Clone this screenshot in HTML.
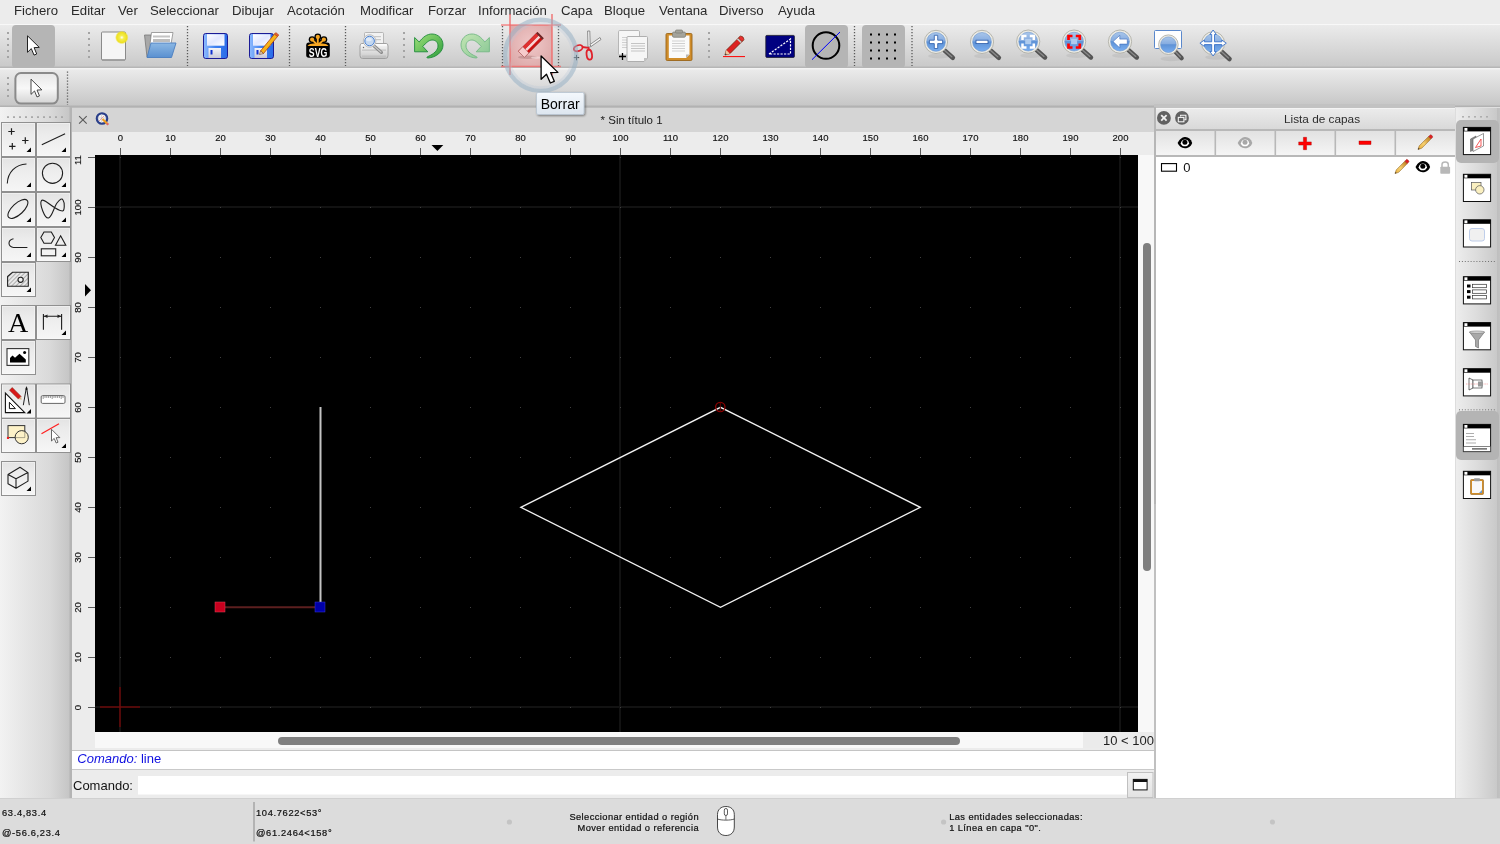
<!DOCTYPE html>
<html><head><meta charset="utf-8">
<style>
*{box-sizing:border-box}
html,body{margin:0;padding:0}
body{width:1500px;height:844px;overflow:hidden;position:relative;will-change:transform;background:#ececec;font-family:"Liberation Sans",sans-serif;color:#262626}
.a{position:absolute}
#menubar{left:0;top:0;width:1500px;height:24px;background:#ececec}
#menubar span{position:absolute;top:3px;font-size:13.2px;color:#2a2a2a;line-height:15px}
#tb1{left:0;top:24px;width:1500px;height:45px;background:linear-gradient(#f8f8f8 0px,#f8f8f8 1px,#ebebeb 1px,#cacaca 42px,#b6b6b6 43px,#b6b6b6 44px,#f4f4f4 44px)}
#tb2{left:0;top:69px;width:1500px;height:38px;background:linear-gradient(#f4f4f4 0px,#eaeaea 1px,#c7c7c7 36px,#b2b2b2 37px)}
#palette{left:0;top:107px;width:72px;height:691px;background:linear-gradient(90deg,#f2f2f2 0px,#d9d9d9 50px,#c6c6c6 69px,#b4b4b4 70px,#b4b4b4 72px)}
#doc{left:72px;top:107px;width:1084px;height:691px;background:linear-gradient(#bcbcbc 0px,#bcbcbc 1px,#ececec 1px)}
#tabbar{left:0;top:1px;width:1082px;height:24px;background:#d5d5d5}
#rulerTop{left:0;top:25px;width:1082px;height:23px;background:#ececec}
#rulerLeft{left:0;top:48px;width:23px;height:593px;background:#ececec}
#canvas{left:23px;top:48px;width:1043px;height:577px;background:#000;overflow:hidden}
#vscroll{left:1066px;top:48px;width:16px;height:577px;background:#f8f8f8}
#hscroll{left:23px;top:625px;width:988px;height:16px;background:#f8f8f8}
#zoomlbl{left:1011px;top:625px;width:71px;height:16px;background:#ebebeb;font-size:13px;text-align:right;line-height:18px;color:#1e1e1e}
#cmdhist{left:0;top:643px;width:1082px;height:20px;background:#fff;border-top:1px solid #c4c4c4;border-bottom:1px solid #c9c9c9}
#cmdrow{left:0;top:663px;width:1082px;height:28px;background:#ececec}
#docborder{left:1082px;top:0;width:2px;height:691px;background:#c0c0c0}
#ldock{left:1156px;top:107px;width:299px;height:691px;background:#fff}
#rdock{left:1455px;top:107px;width:45px;height:691px;background:linear-gradient(90deg,#cdcdcd 0px,#ededed 1px,#dcdcdc 22px,#c9c9c9 42px,#bfbfbf 42.5px,#c2c2c2 45px)}
#status{left:0;top:798px;width:1500px;height:46px;background:#dcdcdc;border-top:1px solid #d0d0d0}
.st{position:absolute;font-size:10px;color:#262626;letter-spacing:0.3px;line-height:12px;white-space:nowrap}
</style></head>
<body>
<div id="menubar" class="a">
<span style="left:14px">Fichero</span>
<span style="left:71px">Editar</span>
<span style="left:118px">Ver</span>
<span style="left:150px">Seleccionar</span>
<span style="left:232px">Dibujar</span>
<span style="left:287px">Acotación</span>
<span style="left:360px">Modificar</span>
<span style="left:428px">Forzar</span>
<span style="left:478px">Información</span>
<span style="left:561px">Capa</span>
<span style="left:604px">Bloque</span>
<span style="left:659px">Ventana</span>
<span style="left:719px">Diverso</span>
<span style="left:778px">Ayuda</span>
</div>
<div id="tb1" class="a"></div>
<div id="tb2" class="a"></div>
<svg class="a" style="left:0;top:0" width="1500" height="110" viewBox="0 0 1500 110">
<defs>
<linearGradient id="lensG" x1="0" y1="0" x2="0" y2="1"><stop offset="0" stop-color="#a9c6ea"/><stop offset="0.45" stop-color="#86ace0"/><stop offset="0.5" stop-color="#5e92d6"/><stop offset="1" stop-color="#79aef0"/></linearGradient>
<linearGradient id="floppyG" x1="0" y1="0" x2="1" y2="0"><stop offset="0" stop-color="#8fbcff"/><stop offset="0.5" stop-color="#3d7ff0"/><stop offset="1" stop-color="#2a6ce8"/></linearGradient>
<linearGradient id="labelG" x1="0" y1="0" x2="1" y2="1"><stop offset="0" stop-color="#ffffff"/><stop offset="0.5" stop-color="#e2e8ff"/><stop offset="1" stop-color="#ffffff"/></linearGradient>
<linearGradient id="shutG" x1="0" y1="0" x2="0" y2="1"><stop offset="0" stop-color="#f4f4f8"/><stop offset="1" stop-color="#c8c8d8"/></linearGradient>
<linearGradient id="undoG" x1="0" y1="0" x2="1" y2="1"><stop offset="0" stop-color="#9fe07a"/><stop offset="1" stop-color="#2f9e3c"/></linearGradient>
<linearGradient id="redoG" x1="1" y1="0" x2="0" y2="1"><stop offset="0" stop-color="#c4e6b4"/><stop offset="1" stop-color="#86c694"/></linearGradient>
<linearGradient id="printG" x1="0" y1="0" x2="0" y2="1"><stop offset="0" stop-color="#f8f8f8"/><stop offset="1" stop-color="#c8c8c8"/></linearGradient>
<linearGradient id="folderG" x1="0" y1="0" x2="0" y2="1"><stop offset="0" stop-color="#8cb8e4"/><stop offset="1" stop-color="#5a90d0"/></linearGradient>
<radialGradient id="glowG"><stop offset="0" stop-color="#ffffff"/><stop offset="0.3" stop-color="#f4ee50"/><stop offset="0.75" stop-color="#eee020"/><stop offset="1" stop-color="#eee020" stop-opacity="0"/></radialGradient>
<radialGradient id="pinkG" cx="0.5" cy="0.45" r="0.65"><stop offset="0" stop-color="#f0c8c8"/><stop offset="1" stop-color="#dca8a8"/></radialGradient>
<linearGradient id="btn2G" x1="0" y1="0" x2="0" y2="1"><stop offset="0" stop-color="#e6e6e6"/><stop offset="0.5" stop-color="#f8f8f8"/><stop offset="1" stop-color="#d4d4d4"/></linearGradient>
</defs>
<rect x="7" y="32" width="2" height="2" fill="#a4a4a4"/>
<rect x="7" y="38" width="2" height="2" fill="#a4a4a4"/>
<rect x="7" y="44" width="2" height="2" fill="#a4a4a4"/>
<rect x="7" y="50" width="2" height="2" fill="#a4a4a4"/>
<rect x="7" y="56" width="2" height="2" fill="#a4a4a4"/>
<rect x="88" y="32" width="2" height="2" fill="#a4a4a4"/>
<rect x="88" y="38" width="2" height="2" fill="#a4a4a4"/>
<rect x="88" y="44" width="2" height="2" fill="#a4a4a4"/>
<rect x="88" y="50" width="2" height="2" fill="#a4a4a4"/>
<rect x="88" y="56" width="2" height="2" fill="#a4a4a4"/>
<rect x="403" y="32" width="2" height="2" fill="#a4a4a4"/>
<rect x="403" y="38" width="2" height="2" fill="#a4a4a4"/>
<rect x="403" y="44" width="2" height="2" fill="#a4a4a4"/>
<rect x="403" y="50" width="2" height="2" fill="#a4a4a4"/>
<rect x="403" y="56" width="2" height="2" fill="#a4a4a4"/>
<rect x="708" y="32" width="2" height="2" fill="#a4a4a4"/>
<rect x="708" y="38" width="2" height="2" fill="#a4a4a4"/>
<rect x="708" y="44" width="2" height="2" fill="#a4a4a4"/>
<rect x="708" y="50" width="2" height="2" fill="#a4a4a4"/>
<rect x="708" y="56" width="2" height="2" fill="#a4a4a4"/>
<line x1="187.5" y1="26" x2="187.5" y2="66" stroke="#5a5a5a" stroke-width="1.3" stroke-dasharray="1.3 1.7"/>
<line x1="289.5" y1="26" x2="289.5" y2="66" stroke="#5a5a5a" stroke-width="1.3" stroke-dasharray="1.3 1.7"/>
<line x1="345.5" y1="26" x2="345.5" y2="66" stroke="#5a5a5a" stroke-width="1.3" stroke-dasharray="1.3 1.7"/>
<line x1="502.5" y1="26" x2="502.5" y2="66" stroke="#5a5a5a" stroke-width="1.3" stroke-dasharray="1.3 1.7"/>
<line x1="558.5" y1="26" x2="558.5" y2="66" stroke="#5a5a5a" stroke-width="1.3" stroke-dasharray="1.3 1.7"/>
<line x1="854.5" y1="26" x2="854.5" y2="66" stroke="#5a5a5a" stroke-width="1.3" stroke-dasharray="1.3 1.7"/>
<line x1="912" y1="26" x2="912" y2="66" stroke="#5a5a5a" stroke-width="1.3" stroke-dasharray="1.3 1.7"/>
<rect x="12" y="25" width="43" height="43" rx="4" fill="#b5b5b5"/>
<rect x="805" y="25" width="43" height="43" rx="4" fill="#b5b5b5"/>
<rect x="862" y="25" width="43" height="43" rx="4" fill="#b5b5b5"/>
<path d="M27.50 35.80 L27.50 52.30 L31.30 48.60 L34.00 55.10 L36.70 54.00 L34.10 47.60 L39.30 47.40 Z" fill="#fff" stroke="#222" stroke-width="1" stroke-linejoin="round"/>
<rect x="101.5" y="32" width="24" height="28" rx="1" fill="#f5f5f5" stroke="#8a8a8a" stroke-width="1"/>
<line x1="102" y1="60" x2="125" y2="60" stroke="#9a9a9a" stroke-width="1.5"/>
<circle cx="121.8" cy="37.5" r="6.8" fill="url(#glowG)"/>
<path d="M144.5 35 L151 35 L150 57 L147 57 Z" fill="#a8a8a8" stroke="#777" stroke-width="0.8"/>
<path d="M151.5 32.5 L173 32.5 L171 44 L149 52 Z" fill="#fff" stroke="#8a8a8a" stroke-width="0.8"/>
<rect x="153" y="35.5" width="17" height="2" fill="#c4c4c4"/><rect x="153" y="39" width="17" height="3" fill="#bdbdbd"/>
<path d="M151 43 L176 43 L171.5 57.5 L147 57.5 Z" fill="url(#folderG)" stroke="#4a7ec0" stroke-width="0.9" stroke-linejoin="round"/>
<rect x="203.5" y="33.5" width="24" height="25" rx="2.2" fill="url(#floppyG)" stroke="#1b1b96" stroke-width="1"/>
<rect x="207" y="34.2" width="17.5" height="11.5" fill="url(#labelG)"/>
<rect x="208.5" y="48" width="12.5" height="10" fill="url(#shutG)"/>
<rect x="210.5" y="50" width="2" height="4.5" fill="#1030d0"/>
<rect x="249.5" y="33.5" width="24" height="25" rx="2.2" fill="url(#floppyG)" stroke="#1b1b96" stroke-width="1"/>
<rect x="253" y="34.2" width="17.5" height="11.5" fill="url(#labelG)"/>
<rect x="254.5" y="48" width="12.5" height="10" fill="url(#shutG)"/>
<rect x="256.5" y="50" width="2" height="4.5" fill="#1030d0"/>
<path d="M260.5 51 L274.5 34 L277.5 36.5 L263.5 53.5 Z" fill="#f6b418" stroke="#b04010" stroke-width="0.8"/>
<path d="M260.5 51 L263.5 53.5 L259.5 54.5 Z" fill="#f0e0c0" stroke="#704020" stroke-width="0.6"/>
<path d="M274.5 34 L275.8 32.6 L278.8 35 L277.5 36.5 Z" fill="#e86030" stroke="#b04010" stroke-width="0.6"/>
<g stroke="#000" stroke-width="4.4" stroke-linecap="round"><line x1="317.8" y1="37" x2="317.8" y2="44.5"/><line x1="312.1" y1="39.6" x2="317" y2="44.5"/><line x1="323.9" y1="39.6" x2="318.6" y2="44.5"/></g>
<g fill="#000"><circle cx="317.8" cy="36.9" r="3.4"/><circle cx="312.1" cy="39.6" r="3.4"/><circle cx="323.9" cy="39.6" r="3.4"/></g>
<rect x="306.2" y="42.6" width="23.6" height="15.1" rx="2.6" fill="#000"/>
<g stroke="#f5a623" stroke-width="1.9" stroke-linecap="round"><line x1="317.8" y1="37" x2="317.8" y2="44.5"/><line x1="312.1" y1="39.6" x2="317" y2="44.5"/><line x1="323.9" y1="39.6" x2="318.6" y2="44.5"/></g>
<g fill="#f5a623"><circle cx="317.8" cy="36.9" r="2.1"/><circle cx="312.1" cy="39.6" r="2.1"/><circle cx="323.9" cy="39.6" r="2.1"/></g>
<path d="M307.5 46 C309 44.2 311 43.6 314 43.5 L322 43.5 C325 43.6 327 44.2 328.5 46 Z" fill="#f5a623"/>
<text x="0" y="0" font-family="Liberation Sans" font-weight="bold" font-size="12.9" fill="#fff" text-anchor="middle" transform="translate(318.1 56.5) scale(0.68 1)">SVG</text>
<rect x="364.5" y="32.5" width="19" height="13" rx="1" fill="#f2f2f2" stroke="#a8a8a8" stroke-width="0.8"/>
<rect x="372" y="36" width="9" height="1.2" fill="#c8c8c8"/><rect x="372" y="39" width="9" height="1.2" fill="#c8c8c8"/>
<path d="M362 43.5 L386 43.5 Q388 43.5 388 46 L388 55.5 Q388 58.5 385.5 58.5 L362.5 58.5 Q360 58.5 360 55.5 L360 46 Q360 43.5 362 43.5 Z" fill="url(#printG)" stroke="#9a9a9a" stroke-width="0.9"/>
<rect x="361" y="44.3" width="26" height="1.2" fill="#fff" opacity="0.9"/>
<rect x="362" y="49.5" width="24" height="1.3" fill="#c4c4c4"/>
<rect x="362" y="55.5" width="24" height="2.3" fill="#b8b8b8" opacity="0.6"/>
<circle cx="363.5" cy="47.5" r="0.7" fill="#666"/>
<line x1="373.5" y1="45.5" x2="381.5" y2="52.5" stroke="#888" stroke-width="3" stroke-linecap="round"/>
<line x1="373.5" y1="45.5" x2="381" y2="52" stroke="#c8c8c8" stroke-width="1.2" stroke-linecap="round"/>
<circle cx="369.6" cy="41" r="6.3" fill="#f4f4f4" stroke="#b8b8b8" stroke-width="0.9"/>
<circle cx="369.6" cy="41" r="4.8" fill="#c4d8f0" stroke="#4a80d0" stroke-width="1"/>
<ellipse cx="368.8" cy="39.5" rx="3" ry="1.8" fill="#e8f0fa" opacity="0.8"/>
<path d="M414.6 37.5 L419.2 42 C423 37 427 34 432 34 C438.5 34 443 39 443 45 C443 52 436 57.5 428 58 C426.5 58 426.5 57 428 56.5 C434 54 438 50 438 46 C438 42 435.5 40 432 40 C429 40 426 43 422.8 46.4 L427.8 51.8 L414.6 51.8 Z" fill="url(#undoG)" stroke="#1e8a3a" stroke-width="0.9" stroke-linejoin="round"/>
<g transform="translate(904 0) scale(-1 1)"><path d="M414.6 37.5 L419.2 42 C423 37 427 34 432 34 C438.5 34 443 39 443 45 C443 52 436 57.5 428 58 C426.5 58 426.5 57 428 56.5 C434 54 438 50 438 46 C438 42 435.5 40 432 40 C429 40 426 43 422.8 46.4 L427.8 51.8 L414.6 51.8 Z" fill="url(#redoG)" stroke="#74b884" stroke-width="0.9" stroke-linejoin="round"/></g>
<rect x="510" y="25" width="42" height="42" fill="url(#pinkG)"/>
<g stroke="#f06a6a" stroke-opacity="0.8" stroke-width="1.7"><line x1="510" y1="14" x2="510" y2="75"/><line x1="552" y1="14" x2="552" y2="75"/><line x1="501" y1="25" x2="561" y2="25"/><line x1="501" y1="66.5" x2="561" y2="66.5"/></g>
<ellipse cx="527.5" cy="57.3" rx="9.5" ry="1.7" fill="#b88888" opacity="0.65"/>
<ellipse cx="536" cy="57.6" rx="5" ry="1.2" fill="#f4dcdc" opacity="0.7"/>
<g transform="translate(530.9 44.8) rotate(-45)"><rect x="-13.5" y="-4.3" width="27" height="8.6" rx="0.8" fill="#cc1010" stroke="#7a1a1a" stroke-width="0.5"/><rect x="-13.5" y="-4.3" width="27" height="3" fill="#e03030"/><rect x="-7.5" y="-1.0" width="20" height="2.6" fill="#f8d4d4"/><rect x="-13.5" y="-4.3" width="6.3" height="8.6" fill="#f6cccc" stroke="#a86060" stroke-width="0.5"/><rect x="11.8" y="-4.3" width="1.9" height="8.6" fill="#6a2a2a"/></g>
<path d="M587.6 31 L589.8 31 L590.3 47 L588 47 Z" fill="#f4f4f4" stroke="#777" stroke-width="0.8"/>
<path d="M590 44.5 L600 37.5 L601 39.5 L591 46.5 Z" fill="#f4f4f4" stroke="#777" stroke-width="0.8"/>
<ellipse cx="578.2" cy="48.2" rx="4.5" ry="2.9" transform="rotate(-20 578.2 48.2)" fill="none" stroke="#e0202a" stroke-width="1.8"/>
<ellipse cx="589.3" cy="54.7" rx="2.7" ry="5" transform="rotate(-8 589.3 54.7)" fill="none" stroke="#e0202a" stroke-width="1.8"/>
<path d="M582 47 L588.5 47.8 L589 50" fill="none" stroke="#e0202a" stroke-width="1.8"/>
<path d="M573.8 57.6 H579.2 M576.5 54.9 V60.3" stroke="#333" stroke-width="1"/>
<rect x="618.5" y="30.5" width="21" height="24.5" rx="1.2" fill="#f6f6f6" stroke="#b0b0b0" stroke-width="0.9"/>
<rect x="622" y="37" width="5" height="1" fill="#d0d0d0"/>
<rect x="622" y="39.5" width="5" height="1" fill="#d0d0d0"/>
<rect x="622" y="42" width="5" height="1" fill="#d0d0d0"/>
<rect x="622" y="44.5" width="5" height="1" fill="#d0d0d0"/>
<rect x="622" y="47" width="5" height="1" fill="#d0d0d0"/>
<path d="M627 37.5 Q627 36.5 628 36.5 L646.5 36.5 Q647.5 36.5 647.5 37.5 L647.5 58.0 L644.0 61.5 L628 61.5 Q627 61.5 627 60.5 Z" fill="#f6f6f6" stroke="#a8a8a8" stroke-width="0.9"/>
<path d="M647.5 58.0 L644.0 58.0 L644.0 61.5 Z" fill="#c0c0c0"/>
<rect x="631" y="43" width="14" height="1" fill="#c4c4c4"/>
<rect x="631" y="45.5" width="14" height="1" fill="#c4c4c4"/>
<rect x="631" y="48" width="14" height="1" fill="#c4c4c4"/>
<rect x="631" y="50.5" width="14" height="1" fill="#c4c4c4"/>
<path d="M619 56.5 H626 M622.5 53 V60" stroke="#000" stroke-width="1.3"/>
<rect x="666" y="33.5" width="26" height="27" rx="1.2" fill="#d08d2a" stroke="#9a6418" stroke-width="0.9"/>
<path d="M668.8 35.5 L689.5 35.5 L689.5 54.5 L686 58 L668.8 58 Z" fill="#fafafa"/>
<path d="M689.5 54.5 L686 54.5 L686 58 Z" fill="#b8b8b8"/>
<rect x="672" y="40.5" width="13" height="1" fill="#cfcfcf"/>
<rect x="672" y="43" width="13" height="1" fill="#cfcfcf"/>
<rect x="672" y="45.5" width="13" height="1" fill="#cfcfcf"/>
<rect x="672" y="48" width="13" height="1" fill="#cfcfcf"/>
<rect x="672" y="50.5" width="13" height="1" fill="#cfcfcf"/>
<rect x="672.5" y="32" width="13" height="5.3" rx="1.3" fill="#a4a49c" stroke="#7c7c74" stroke-width="0.7"/>
<rect x="675.5" y="30" width="7" height="3" rx="1" fill="#a4a49c" stroke="#7c7c74" stroke-width="0.7"/>
<line x1="723" y1="56.6" x2="745" y2="56.6" stroke="#ff0000" stroke-width="1"/>
<g transform="translate(734.5 45.5) rotate(-45)"><path d="M-13.5 0 L-9 -2.5 L10 -2.5 L10 2.5 L-9 2.5 Z" fill="#d22" stroke="#6a2a10" stroke-width="0.7"/><path d="M-13.5 0 L-9 -2.5 L-9 2.5 Z" fill="#f0c8a0"/><path d="M-13.5 0 L-11.8 -1 L-11.8 1 Z" fill="#222"/><rect x="6" y="-2.5" width="2" height="5" fill="#c8c8c8"/><path d="M8 -2.5 L11 -2.5 Q13 0 11 2.5 L8 2.5 Z" fill="#e83030" stroke="#6a2a10" stroke-width="0.6"/></g>
<rect x="765.8" y="35.4" width="28.6" height="22" rx="1" fill="#000080" stroke="#1a1a2a" stroke-width="0.8"/>
<path d="M769 54 L790.5 39 L790.5 54 Z" fill="none" stroke="#fff" stroke-width="1.2" stroke-dasharray="2.2 1.3"/>
<circle cx="826" cy="45.5" r="13.3" fill="none" stroke="#000" stroke-width="2"/>
<line x1="812" y1="59.7" x2="840" y2="32" stroke="#0000ff" stroke-width="1"/>
<rect x="870" y="33.5" width="2" height="2" fill="#000"/>
<rect x="870" y="41.5" width="2" height="2" fill="#000"/>
<rect x="870" y="49.5" width="2" height="2" fill="#000"/>
<rect x="870" y="57.5" width="2" height="2" fill="#000"/>
<rect x="878" y="33.5" width="2" height="2" fill="#000"/>
<rect x="878" y="41.5" width="2" height="2" fill="#000"/>
<rect x="878" y="49.5" width="2" height="2" fill="#000"/>
<rect x="878" y="57.5" width="2" height="2" fill="#000"/>
<rect x="886" y="33.5" width="2" height="2" fill="#000"/>
<rect x="886" y="41.5" width="2" height="2" fill="#000"/>
<rect x="886" y="49.5" width="2" height="2" fill="#000"/>
<rect x="886" y="57.5" width="2" height="2" fill="#000"/>
<rect x="894" y="33.5" width="2" height="2" fill="#000"/>
<rect x="894" y="41.5" width="2" height="2" fill="#000"/>
<rect x="894" y="49.5" width="2" height="2" fill="#000"/>
<rect x="894" y="57.5" width="2" height="2" fill="#000"/>
<ellipse cx="939" cy="55.9" rx="11" ry="2.5" fill="#000" opacity="0.06"/>
<line x1="944.352" y1="50.251999999999995" x2="952.8" y2="57.7" stroke="#555" stroke-width="4.6" stroke-linecap="round"/>
<line x1="944.352" y1="50.251999999999995" x2="951.8" y2="56.7" stroke="#8a8a8a" stroke-width="1.3" stroke-linecap="round"/>
<circle cx="936" cy="41.9" r="11.6" fill="#ecebe4" stroke="#a8a8a0" stroke-width="0.8"/>
<circle cx="936" cy="41.9" r="9.4" fill="url(#lensG)" stroke="#6a96d0" stroke-width="0.6"/>
<path d="M934.3 35.3 h3.4 v4.9 h4.9 v3.4 h-4.9 v4.9 h-3.4 v-4.9 h-4.9 v-3.4 h4.9 Z" fill="#fff" stroke="#2a5aa8" stroke-width="0.8"/>
<ellipse cx="985" cy="55.9" rx="11" ry="2.5" fill="#000" opacity="0.06"/>
<line x1="990.352" y1="50.251999999999995" x2="998.8" y2="57.7" stroke="#555" stroke-width="4.6" stroke-linecap="round"/>
<line x1="990.352" y1="50.251999999999995" x2="997.8" y2="56.7" stroke="#8a8a8a" stroke-width="1.3" stroke-linecap="round"/>
<circle cx="982" cy="41.9" r="11.6" fill="#ecebe4" stroke="#a8a8a0" stroke-width="0.8"/>
<circle cx="982" cy="41.9" r="9.4" fill="url(#lensG)" stroke="#6a96d0" stroke-width="0.6"/>
<rect x="976" y="40.2" width="12" height="3.4" fill="#fff" stroke="#2a5aa8" stroke-width="0.8"/>
<ellipse cx="1031.2" cy="55.6" rx="11" ry="2.5" fill="#000" opacity="0.06"/>
<line x1="1036.5520000000001" y1="49.952" x2="1045.0" y2="57.400000000000006" stroke="#555" stroke-width="4.6" stroke-linecap="round"/>
<line x1="1036.5520000000001" y1="49.952" x2="1044.0" y2="56.400000000000006" stroke="#8a8a8a" stroke-width="1.3" stroke-linecap="round"/>
<circle cx="1028.2" cy="41.6" r="11.6" fill="#ecebe4" stroke="#a8a8a0" stroke-width="0.8"/>
<circle cx="1028.2" cy="41.6" r="9.4" fill="url(#lensG)" stroke="#6a96d0" stroke-width="0.6"/>
<rect x="1025.2" y="39" width="6" height="5.2" fill="#b0ccee"/>
<path d="M1022.5 40 v-4 h4 M1029.8 36 h4 v4 M1033.8 43.5 v4 h-4 M1026.5 47.5 h-4 v-4" fill="none" stroke="#fff" stroke-width="2.5"/>
<ellipse cx="1077.1" cy="55.6" rx="11" ry="2.5" fill="#000" opacity="0.06"/>
<line x1="1082.452" y1="49.952" x2="1090.8999999999999" y2="57.400000000000006" stroke="#555" stroke-width="4.6" stroke-linecap="round"/>
<line x1="1082.452" y1="49.952" x2="1089.8999999999999" y2="56.400000000000006" stroke="#8a8a8a" stroke-width="1.3" stroke-linecap="round"/>
<circle cx="1074.1" cy="41.6" r="11.6" fill="#ecebe4" stroke="#a8a8a0" stroke-width="0.8"/>
<circle cx="1074.1" cy="41.6" r="9.4" fill="url(#lensG)" stroke="#6a96d0" stroke-width="0.6"/>
<rect x="1071.1" y="39" width="6" height="5.2" fill="#b0ccee"/>
<path d="M1068.5 40 v-4 h4 M1075.8 36 h4 v4 M1079.8 43.5 v4 h-4 M1072.5 47.5 h-4 v-4" fill="none" stroke="#ff0000" stroke-width="2.7"/>
<ellipse cx="1123" cy="55.6" rx="11" ry="2.5" fill="#000" opacity="0.06"/>
<line x1="1128.352" y1="49.952" x2="1136.8" y2="57.400000000000006" stroke="#555" stroke-width="4.6" stroke-linecap="round"/>
<line x1="1128.352" y1="49.952" x2="1135.8" y2="56.400000000000006" stroke="#8a8a8a" stroke-width="1.3" stroke-linecap="round"/>
<circle cx="1120" cy="41.6" r="11.6" fill="#ecebe4" stroke="#a8a8a0" stroke-width="0.8"/>
<circle cx="1120" cy="41.6" r="9.4" fill="url(#lensG)" stroke="#6a96d0" stroke-width="0.6"/>
<path d="M1113 41.6 L1119.8 35.3 L1119.8 39.1 L1127.3 39.1 L1127.3 44.1 L1119.8 44.1 L1119.8 47.9 Z" fill="#fff" stroke="#3a6ab8" stroke-width="0.6"/>
<rect x="1154.5" y="30.5" width="27" height="18" rx="1" fill="#fff" stroke="#5a88cc" stroke-width="1"/>
<ellipse cx="1171.4" cy="58.7" rx="11" ry="2.5" fill="#000" opacity="0.06"/>
<line x1="1175.4560000000001" y1="51.756" x2="1181.5" y2="58" stroke="#555" stroke-width="4.6" stroke-linecap="round"/>
<line x1="1175.4560000000001" y1="51.756" x2="1180.5" y2="57" stroke="#8a8a8a" stroke-width="1.3" stroke-linecap="round"/>
<circle cx="1168.4" cy="44.7" r="9.8" fill="#ecebe4" stroke="#a8a8a0" stroke-width="0.8"/>
<circle cx="1168.4" cy="44.7" r="7.8" fill="url(#lensG)" stroke="#6a96d0" stroke-width="0.6"/>
<ellipse cx="1216.1" cy="57.2" rx="11" ry="2.5" fill="#000" opacity="0.06"/>
<line x1="1221.3799999999999" y1="51.480000000000004" x2="1229.5" y2="59" stroke="#555" stroke-width="4.6" stroke-linecap="round"/>
<line x1="1221.3799999999999" y1="51.480000000000004" x2="1228.5" y2="58" stroke="#8a8a8a" stroke-width="1.3" stroke-linecap="round"/>
<circle cx="1213.1" cy="43.2" r="11.5" fill="#ecebe4" stroke="#a8a8a0" stroke-width="0.8"/>
<circle cx="1213.1" cy="43.2" r="9.3" fill="url(#lensG)" stroke="#6a96d0" stroke-width="0.6"/>
<path d="M1213.1 30 L1216.3 34.5 L1214.5 34.5 L1214.5 41.8 L1221.8 41.8 L1221.8 40 L1226.3 43.2 L1221.8 46.4 L1221.8 44.6 L1214.5 44.6 L1214.5 51.5 L1216.3 51.5 L1213.1 56 L1209.9 51.5 L1211.7 51.5 L1211.7 44.6 L1204.4 44.6 L1204.4 46.4 L1199.9 43.2 L1204.4 40 L1204.4 41.8 L1211.7 41.8 L1211.7 34.5 L1209.9 34.5 Z" fill="#fff" stroke="#3a72c8" stroke-width="0.9" stroke-linejoin="round"/>
<rect x="7" y="77" width="2" height="2" fill="#a4a4a4"/>
<rect x="7" y="83" width="2" height="2" fill="#a4a4a4"/>
<rect x="7" y="89" width="2" height="2" fill="#a4a4a4"/>
<rect x="7" y="95" width="2" height="2" fill="#a4a4a4"/>
<rect x="15.4" y="73" width="42.4" height="30.6" rx="5.5" fill="url(#btn2G)" stroke="#8a8a8a" stroke-width="2"/>
<path d="M31.00 79.20 L31.00 94.38 L34.50 90.98 L36.98 96.96 L39.46 95.94 L37.07 90.06 L41.86 89.87 Z" fill="#fff" stroke="#333" stroke-width="0.9" stroke-linejoin="round"/>
<line x1="67.5" y1="71.5" x2="67.5" y2="105" stroke="#606060" stroke-width="1.3" stroke-dasharray="1.3 1.7"/>
</svg>
<div id="palette" class="a"></div>
<svg class="a" style="left:0;top:107px" width="72" height="400" viewBox="0 107 72 400">
<defs>
<linearGradient id="pbG" x1="0" y1="0" x2="0" y2="1"><stop offset="0" stop-color="#e3e3e3"/><stop offset="0.35" stop-color="#ececec"/><stop offset="1" stop-color="#f6f6f6"/></linearGradient>
<pattern id="hatch" width="3" height="3" patternUnits="userSpaceOnUse" patternTransform="rotate(45)"><rect width="3" height="3" fill="#e8e8e8"/><line x1="0" y1="0" x2="0" y2="3" stroke="#666" stroke-width="0.9"/></pattern>
</defs>
<rect x="7.1" y="116.2" width="1.8" height="1.8" fill="#a4a4a4"/>
<rect x="13.1" y="116.2" width="1.8" height="1.8" fill="#a4a4a4"/>
<rect x="19.1" y="116.2" width="1.8" height="1.8" fill="#a4a4a4"/>
<rect x="25.1" y="116.2" width="1.8" height="1.8" fill="#a4a4a4"/>
<rect x="31.1" y="116.2" width="1.8" height="1.8" fill="#a4a4a4"/>
<rect x="37.1" y="116.2" width="1.8" height="1.8" fill="#a4a4a4"/>
<rect x="43.1" y="116.2" width="1.8" height="1.8" fill="#a4a4a4"/>
<rect x="49.1" y="116.2" width="1.8" height="1.8" fill="#a4a4a4"/>
<rect x="55.1" y="116.2" width="1.8" height="1.8" fill="#a4a4a4"/>
<rect x="61.1" y="116.2" width="1.8" height="1.8" fill="#a4a4a4"/>
<rect x="1.5" y="122.5" width="34" height="34" fill="url(#pbG)" stroke="#909090" stroke-width="1"/>
<rect x="2.5" y="123.5" width="32" height="32" fill="none" stroke="#fbfbfb" stroke-width="0.6" opacity="0.8"/>
<path d="M26.5 152 L31.0 147.5 L31.0 152 Z" fill="#000"/>
<rect x="36.5" y="122.5" width="34" height="34" fill="url(#pbG)" stroke="#909090" stroke-width="1"/>
<rect x="37.5" y="123.5" width="32" height="32" fill="none" stroke="#fbfbfb" stroke-width="0.6" opacity="0.8"/>
<path d="M61.5 152 L66.0 147.5 L66.0 152 Z" fill="#000"/>
<rect x="1.5" y="157.5" width="34" height="34" fill="url(#pbG)" stroke="#909090" stroke-width="1"/>
<rect x="2.5" y="158.5" width="32" height="32" fill="none" stroke="#fbfbfb" stroke-width="0.6" opacity="0.8"/>
<path d="M26.5 187 L31.0 182.5 L31.0 187 Z" fill="#000"/>
<rect x="36.5" y="157.5" width="34" height="34" fill="url(#pbG)" stroke="#909090" stroke-width="1"/>
<rect x="37.5" y="158.5" width="32" height="32" fill="none" stroke="#fbfbfb" stroke-width="0.6" opacity="0.8"/>
<path d="M61.5 187 L66.0 182.5 L66.0 187 Z" fill="#000"/>
<rect x="1.5" y="192.5" width="34" height="34" fill="url(#pbG)" stroke="#909090" stroke-width="1"/>
<rect x="2.5" y="193.5" width="32" height="32" fill="none" stroke="#fbfbfb" stroke-width="0.6" opacity="0.8"/>
<path d="M26.5 222 L31.0 217.5 L31.0 222 Z" fill="#000"/>
<rect x="36.5" y="192.5" width="34" height="34" fill="url(#pbG)" stroke="#909090" stroke-width="1"/>
<rect x="37.5" y="193.5" width="32" height="32" fill="none" stroke="#fbfbfb" stroke-width="0.6" opacity="0.8"/>
<path d="M61.5 222 L66.0 217.5 L66.0 222 Z" fill="#000"/>
<rect x="1.5" y="227.5" width="34" height="34" fill="url(#pbG)" stroke="#909090" stroke-width="1"/>
<rect x="2.5" y="228.5" width="32" height="32" fill="none" stroke="#fbfbfb" stroke-width="0.6" opacity="0.8"/>
<path d="M26.5 257 L31.0 252.5 L31.0 257 Z" fill="#000"/>
<rect x="36.5" y="227.5" width="34" height="34" fill="url(#pbG)" stroke="#909090" stroke-width="1"/>
<rect x="37.5" y="228.5" width="32" height="32" fill="none" stroke="#fbfbfb" stroke-width="0.6" opacity="0.8"/>
<path d="M61.5 257 L66.0 252.5 L66.0 257 Z" fill="#000"/>
<rect x="1.5" y="262.5" width="34" height="34" fill="url(#pbG)" stroke="#909090" stroke-width="1"/>
<rect x="2.5" y="263.5" width="32" height="32" fill="none" stroke="#fbfbfb" stroke-width="0.6" opacity="0.8"/>
<path d="M26.5 292 L31.0 287.5 L31.0 292 Z" fill="#000"/>
<rect x="1.5" y="305.5" width="34" height="34" fill="url(#pbG)" stroke="#909090" stroke-width="1"/>
<rect x="2.5" y="306.5" width="32" height="32" fill="none" stroke="#fbfbfb" stroke-width="0.6" opacity="0.8"/>
<rect x="36.5" y="305.5" width="34" height="34" fill="url(#pbG)" stroke="#909090" stroke-width="1"/>
<rect x="37.5" y="306.5" width="32" height="32" fill="none" stroke="#fbfbfb" stroke-width="0.6" opacity="0.8"/>
<path d="M61.5 335 L66.0 330.5 L66.0 335 Z" fill="#000"/>
<rect x="1.5" y="340.5" width="34" height="34" fill="url(#pbG)" stroke="#909090" stroke-width="1"/>
<rect x="2.5" y="341.5" width="32" height="32" fill="none" stroke="#fbfbfb" stroke-width="0.6" opacity="0.8"/>
<rect x="1.5" y="384.0" width="34" height="34" fill="url(#pbG)" stroke="#909090" stroke-width="1"/>
<rect x="2.5" y="385.0" width="32" height="32" fill="none" stroke="#fbfbfb" stroke-width="0.6" opacity="0.8"/>
<path d="M26.5 413.5 L31.0 409.0 L31.0 413.5 Z" fill="#000"/>
<rect x="36.5" y="384.0" width="34" height="34" fill="url(#pbG)" stroke="#909090" stroke-width="1"/>
<rect x="37.5" y="385.0" width="32" height="32" fill="none" stroke="#fbfbfb" stroke-width="0.6" opacity="0.8"/>
<rect x="1.5" y="418.5" width="34" height="34" fill="url(#pbG)" stroke="#909090" stroke-width="1"/>
<rect x="2.5" y="419.5" width="32" height="32" fill="none" stroke="#fbfbfb" stroke-width="0.6" opacity="0.8"/>
<rect x="36.5" y="418.5" width="34" height="34" fill="url(#pbG)" stroke="#909090" stroke-width="1"/>
<rect x="37.5" y="419.5" width="32" height="32" fill="none" stroke="#fbfbfb" stroke-width="0.6" opacity="0.8"/>
<path d="M61.5 448 L66.0 443.5 L66.0 448 Z" fill="#000"/>
<rect x="1.5" y="461.5" width="34" height="34" fill="url(#pbG)" stroke="#909090" stroke-width="1"/>
<rect x="2.5" y="462.5" width="32" height="32" fill="none" stroke="#fbfbfb" stroke-width="0.6" opacity="0.8"/>
<path d="M26.5 491 L31.0 486.5 L31.0 491 Z" fill="#000"/>
<path d="M8.3 131.5 H14.7 M11.5 128.3 V134.7 M22.1 140.5 H28.5 M25.3 137.3 V143.7 M9.1 146.3 H15.5 M12.3 143.1 V149.5" fill="none" stroke="#1e1e1e" stroke-width="1.2"/>
<line x1="41.8" y1="144.7" x2="65.1" y2="133.8" fill="none" stroke="#1e1e1e" stroke-width="1.1"/>
<path d="M7.3 183.5 C7.8 172 15.5 164.5 26.5 164" fill="none" stroke="#1e1e1e" stroke-width="1.1"/>
<circle cx="52.5" cy="173.3" r="10.1" fill="none" stroke="#1e1e1e" stroke="#333" stroke-width="1.1"/>
<ellipse cx="17.9" cy="208.9" rx="12.6" ry="5.6" transform="rotate(-43 17.9 208.9)" fill="none" stroke="#1e1e1e" stroke="#333" stroke-width="1.1"/>
<path d="M41.5 200.5 C39 204 45 219 48.5 218 C52 217 54 207 57 203 C60 199 62 198 63 200 C65 203 64.5 211 62.5 211 C59 211 52 206 48 203 C44 200 42.5 199.5 41.5 200.5 Z" fill="none" stroke="#1e1e1e" stroke="#333" stroke-width="1.1"/>
<path d="M13.5 238.8 C10.5 239.5 9 241.5 9 243.2 C9 245.5 11 247.5 13.5 247.5 L27.4 247.5" fill="none" stroke="#1e1e1e" stroke="#333" stroke-width="1.1"/>
<path d="M44 232 L51.3 232 L54.5 237.6 L51.3 243.3 L44 243.3 L40.8 237.6 Z" fill="none" stroke="#1e1e1e" stroke="#333" stroke-width="1.1"/>
<path d="M60.6 235.8 L65.8 245.3 L55.5 245.3 Z" fill="none" stroke="#1e1e1e" stroke="#333" stroke-width="1.1"/>
<rect x="41.3" y="248.8" width="14.4" height="7" fill="none" stroke="#1e1e1e" stroke="#333" stroke-width="1.1"/>
<path d="M7.6 276.5 L12.5 272.3 L28.3 272.3 L28.3 286.3 L7.6 286.3 Z" fill="url(#hatch)" stroke="#222" stroke-width="1.1"/>
<circle cx="20.6" cy="279.8" r="2.6" fill="#eee" stroke="#222" stroke-width="1.1"/>
<text x="18.2" y="331.6" font-family="Liberation Serif" font-size="28" text-anchor="middle" fill="#000">A</text>
<path d="M43.4 314 V329.8 M61.6 314 V329.8 M43.4 316.3 H61.6" fill="none" stroke="#1e1e1e" stroke="#222" stroke-width="1.1"/>
<path d="M43.8 316.3 L47.5 314.6 L47.5 318 Z M61.2 316.3 L57.5 314.6 L57.5 318 Z" fill="#222"/>
<rect x="7" y="348.6" width="21.8" height="16.8" fill="#fff" stroke="#333" stroke-width="1.1"/>
<path d="M10 362.4 L10 358 L12.5 355.6 L15 357.8 L19.5 353.8 L25.8 359.4 L25.8 362.4 Z" fill="#000"/>
<circle cx="24.6" cy="352.4" r="1.5" fill="#000"/>
<path d="M5.4 393 L5.4 412.6 L24.8 412.6 Z" fill="#fff" stroke="#111" stroke-width="1.1"/>
<path d="M9.4 402.3 L9.4 408.6 L15.4 408.6 Z" fill="none" stroke="#111" stroke-width="1"/>
<g transform="translate(15.3 393.3) rotate(45)"><rect x="-6.3" y="-1.9" width="12.6" height="3.8" fill="#d81818" stroke="#7a2010" stroke-width="0.5"/><path d="M6.3 -1.9 L9 0 L6.3 1.9 Z" fill="#e0b080"/></g>
<path d="M26.5 386.8 L23.3 405.2 M26.5 386.8 L29.3 405.2" fill="none" stroke="#1e1e1e" stroke="#111" stroke-width="1"/>
<circle cx="26.5" cy="389" r="1" fill="#111"/>
<rect x="41.2" y="395.6" width="23.8" height="7.8" rx="1.3" fill="#fff" stroke="#666" stroke-width="1"/>
<path d="M43.2 396 V399M45.0 396 V398M46.800000000000004 396 V398M48.6 396 V398M50.400000000000006 396 V398M52.2 396 V399M54.0 396 V398M55.800000000000004 396 V398M57.6 396 V398M59.400000000000006 396 V398M61.2 396 V399M63.0 396 V398" stroke="#555" stroke-width="0.6"/>
<rect x="8" y="425.6" width="16.8" height="12" fill="#fdf2c8" stroke="#333" stroke-width="1"/>
<circle cx="21.7" cy="437.2" r="6.6" fill="#fdf2c8" stroke="#333" stroke-width="1"/>
<path d="M15.2 437.6 L24.8 437.6 L24.8 430.6" fill="none" stroke="#333" stroke-width="0.8" opacity="0.5"/>
<circle cx="8" cy="437.9" r="1.2" fill="#f02020"/>
<line x1="41.5" y1="433.8" x2="59" y2="423.8" stroke="#ff2020" stroke-width="1.2"/>
<path d="M51.5 429.3 L51.5 441 L54.2 438.4 L56.2 443 L58 442.2 L56.1 437.7 L59.8 437.6 Z" fill="#fff" stroke="#444" stroke-width="0.8" stroke-linejoin="round"/>
<path d="M8 474.5 L20 467.3 L28 472.6 L16 478.7 Z M8 474.5 V483.8 L16 488.3 L28 481.1 V472.6 M16 478.7 V488.3" fill="none" stroke="#1e1e1e" stroke="#222" stroke-width="1.1" stroke-linejoin="round"/>
</svg>
<div id="doc" class="a">
  <div id="tabbar" class="a"></div>
  <div id="rulerTop" class="a"></div>
  <div id="rulerLeft" class="a"></div>
  <div id="canvas" class="a"></div>
  <div id="vscroll" class="a"></div>
  <div id="hscroll" class="a"></div>
  <div id="zoomlbl" class="a">10 &lt; 100</div>
  <div id="cmdhist" class="a"></div>
  <div id="cmdrow" class="a"></div>
  <div id="docborder" class="a"></div>
</div>
<svg class="a" style="left:0;top:0" width="1500" height="844" viewBox="0 0 1500 844">
<defs><clipPath id="cv"><rect x="95" y="155" width="1043" height="577"/></clipPath><clipPath id="vr"><rect x="72" y="155" width="23" height="577"/></clipPath></defs>
<rect x="120" y="148" width="1" height="7" fill="#5a5a5a"/>
<text x="120.5" y="141" font-size="9.5" text-anchor="middle" fill="#111" stroke="#111" stroke-width="0.15">0</text>
<rect x="170" y="148" width="1" height="7" fill="#5a5a5a"/>
<text x="170.5" y="141" font-size="9.5" text-anchor="middle" fill="#111" stroke="#111" stroke-width="0.15">10</text>
<rect x="220" y="148" width="1" height="7" fill="#5a5a5a"/>
<text x="220.5" y="141" font-size="9.5" text-anchor="middle" fill="#111" stroke="#111" stroke-width="0.15">20</text>
<rect x="270" y="148" width="1" height="7" fill="#5a5a5a"/>
<text x="270.5" y="141" font-size="9.5" text-anchor="middle" fill="#111" stroke="#111" stroke-width="0.15">30</text>
<rect x="320" y="148" width="1" height="7" fill="#5a5a5a"/>
<text x="320.5" y="141" font-size="9.5" text-anchor="middle" fill="#111" stroke="#111" stroke-width="0.15">40</text>
<rect x="370" y="148" width="1" height="7" fill="#5a5a5a"/>
<text x="370.5" y="141" font-size="9.5" text-anchor="middle" fill="#111" stroke="#111" stroke-width="0.15">50</text>
<rect x="420" y="148" width="1" height="7" fill="#5a5a5a"/>
<text x="420.5" y="141" font-size="9.5" text-anchor="middle" fill="#111" stroke="#111" stroke-width="0.15">60</text>
<rect x="470" y="148" width="1" height="7" fill="#5a5a5a"/>
<text x="470.5" y="141" font-size="9.5" text-anchor="middle" fill="#111" stroke="#111" stroke-width="0.15">70</text>
<rect x="520" y="148" width="1" height="7" fill="#5a5a5a"/>
<text x="520.5" y="141" font-size="9.5" text-anchor="middle" fill="#111" stroke="#111" stroke-width="0.15">80</text>
<rect x="570" y="148" width="1" height="7" fill="#5a5a5a"/>
<text x="570.5" y="141" font-size="9.5" text-anchor="middle" fill="#111" stroke="#111" stroke-width="0.15">90</text>
<rect x="620" y="148" width="1" height="7" fill="#5a5a5a"/>
<text x="620.5" y="141" font-size="9.5" text-anchor="middle" fill="#111" stroke="#111" stroke-width="0.15">100</text>
<rect x="670" y="148" width="1" height="7" fill="#5a5a5a"/>
<text x="670.5" y="141" font-size="9.5" text-anchor="middle" fill="#111" stroke="#111" stroke-width="0.15">110</text>
<rect x="720" y="148" width="1" height="7" fill="#5a5a5a"/>
<text x="720.5" y="141" font-size="9.5" text-anchor="middle" fill="#111" stroke="#111" stroke-width="0.15">120</text>
<rect x="770" y="148" width="1" height="7" fill="#5a5a5a"/>
<text x="770.5" y="141" font-size="9.5" text-anchor="middle" fill="#111" stroke="#111" stroke-width="0.15">130</text>
<rect x="820" y="148" width="1" height="7" fill="#5a5a5a"/>
<text x="820.5" y="141" font-size="9.5" text-anchor="middle" fill="#111" stroke="#111" stroke-width="0.15">140</text>
<rect x="870" y="148" width="1" height="7" fill="#5a5a5a"/>
<text x="870.5" y="141" font-size="9.5" text-anchor="middle" fill="#111" stroke="#111" stroke-width="0.15">150</text>
<rect x="920" y="148" width="1" height="7" fill="#5a5a5a"/>
<text x="920.5" y="141" font-size="9.5" text-anchor="middle" fill="#111" stroke="#111" stroke-width="0.15">160</text>
<rect x="970" y="148" width="1" height="7" fill="#5a5a5a"/>
<text x="970.5" y="141" font-size="9.5" text-anchor="middle" fill="#111" stroke="#111" stroke-width="0.15">170</text>
<rect x="1020" y="148" width="1" height="7" fill="#5a5a5a"/>
<text x="1020.5" y="141" font-size="9.5" text-anchor="middle" fill="#111" stroke="#111" stroke-width="0.15">180</text>
<rect x="1070" y="148" width="1" height="7" fill="#5a5a5a"/>
<text x="1070.5" y="141" font-size="9.5" text-anchor="middle" fill="#111" stroke="#111" stroke-width="0.15">190</text>
<rect x="1120" y="148" width="1" height="7" fill="#5a5a5a"/>
<text x="1120.5" y="141" font-size="9.5" text-anchor="middle" fill="#111" stroke="#111" stroke-width="0.15">200</text>
<g clip-path="url(#vr)">
<rect x="88" y="707" width="7" height="1" fill="#5a5a5a"/>
<text transform="translate(80.8,707.5) rotate(-90)" font-size="9.5" text-anchor="middle" fill="#111" stroke="#111" stroke-width="0.15">0</text>
<rect x="88" y="657" width="7" height="1" fill="#5a5a5a"/>
<text transform="translate(80.8,657.5) rotate(-90)" font-size="9.5" text-anchor="middle" fill="#111" stroke="#111" stroke-width="0.15">10</text>
<rect x="88" y="607" width="7" height="1" fill="#5a5a5a"/>
<text transform="translate(80.8,607.5) rotate(-90)" font-size="9.5" text-anchor="middle" fill="#111" stroke="#111" stroke-width="0.15">20</text>
<rect x="88" y="557" width="7" height="1" fill="#5a5a5a"/>
<text transform="translate(80.8,557.5) rotate(-90)" font-size="9.5" text-anchor="middle" fill="#111" stroke="#111" stroke-width="0.15">30</text>
<rect x="88" y="507" width="7" height="1" fill="#5a5a5a"/>
<text transform="translate(80.8,507.5) rotate(-90)" font-size="9.5" text-anchor="middle" fill="#111" stroke="#111" stroke-width="0.15">40</text>
<rect x="88" y="457" width="7" height="1" fill="#5a5a5a"/>
<text transform="translate(80.8,457.5) rotate(-90)" font-size="9.5" text-anchor="middle" fill="#111" stroke="#111" stroke-width="0.15">50</text>
<rect x="88" y="407" width="7" height="1" fill="#5a5a5a"/>
<text transform="translate(80.8,407.5) rotate(-90)" font-size="9.5" text-anchor="middle" fill="#111" stroke="#111" stroke-width="0.15">60</text>
<rect x="88" y="357" width="7" height="1" fill="#5a5a5a"/>
<text transform="translate(80.8,357.5) rotate(-90)" font-size="9.5" text-anchor="middle" fill="#111" stroke="#111" stroke-width="0.15">70</text>
<rect x="88" y="307" width="7" height="1" fill="#5a5a5a"/>
<text transform="translate(80.8,307.5) rotate(-90)" font-size="9.5" text-anchor="middle" fill="#111" stroke="#111" stroke-width="0.15">80</text>
<rect x="88" y="257" width="7" height="1" fill="#5a5a5a"/>
<text transform="translate(80.8,257.5) rotate(-90)" font-size="9.5" text-anchor="middle" fill="#111" stroke="#111" stroke-width="0.15">90</text>
<rect x="88" y="207" width="7" height="1" fill="#5a5a5a"/>
<text transform="translate(80.8,207.5) rotate(-90)" font-size="9.5" text-anchor="middle" fill="#111" stroke="#111" stroke-width="0.15">100</text>
<rect x="88" y="157" width="7" height="1" fill="#5a5a5a"/>
<text transform="translate(80.8,157.5) rotate(-90)" font-size="9.5" text-anchor="middle" fill="#111" stroke="#111" stroke-width="0.15">110</text>
</g>
<path d="M431.5 145 L443.3 145 L437.4 151 Z" fill="#000"/>
<path d="M85 284 L85 296.5 L91 290.2 Z" fill="#000"/>
<g clip-path="url(#cv)">
<rect x="95" y="155" width="1043" height="577" fill="#000"/>
<rect x="119" y="155" width="2" height="577" fill="#121212"/>
<rect x="619" y="155" width="2" height="577" fill="#121212"/>
<rect x="1119" y="155" width="2" height="577" fill="#121212"/>
<rect x="95" y="206" width="1043" height="2" fill="#121212"/>
<rect x="95" y="706" width="1043" height="2" fill="#121212"/>
<path d="M120 707h1v1h-1zM120 657h1v1h-1zM120 607h1v1h-1zM120 557h1v1h-1zM120 507h1v1h-1zM120 457h1v1h-1zM120 407h1v1h-1zM120 357h1v1h-1zM120 307h1v1h-1zM120 257h1v1h-1zM120 207h1v1h-1zM120 157h1v1h-1zM170 707h1v1h-1zM170 657h1v1h-1zM170 607h1v1h-1zM170 557h1v1h-1zM170 507h1v1h-1zM170 457h1v1h-1zM170 407h1v1h-1zM170 357h1v1h-1zM170 307h1v1h-1zM170 257h1v1h-1zM170 207h1v1h-1zM170 157h1v1h-1zM220 707h1v1h-1zM220 657h1v1h-1zM220 607h1v1h-1zM220 557h1v1h-1zM220 507h1v1h-1zM220 457h1v1h-1zM220 407h1v1h-1zM220 357h1v1h-1zM220 307h1v1h-1zM220 257h1v1h-1zM220 207h1v1h-1zM220 157h1v1h-1zM270 707h1v1h-1zM270 657h1v1h-1zM270 607h1v1h-1zM270 557h1v1h-1zM270 507h1v1h-1zM270 457h1v1h-1zM270 407h1v1h-1zM270 357h1v1h-1zM270 307h1v1h-1zM270 257h1v1h-1zM270 207h1v1h-1zM270 157h1v1h-1zM320 707h1v1h-1zM320 657h1v1h-1zM320 607h1v1h-1zM320 557h1v1h-1zM320 507h1v1h-1zM320 457h1v1h-1zM320 407h1v1h-1zM320 357h1v1h-1zM320 307h1v1h-1zM320 257h1v1h-1zM320 207h1v1h-1zM320 157h1v1h-1zM370 707h1v1h-1zM370 657h1v1h-1zM370 607h1v1h-1zM370 557h1v1h-1zM370 507h1v1h-1zM370 457h1v1h-1zM370 407h1v1h-1zM370 357h1v1h-1zM370 307h1v1h-1zM370 257h1v1h-1zM370 207h1v1h-1zM370 157h1v1h-1zM420 707h1v1h-1zM420 657h1v1h-1zM420 607h1v1h-1zM420 557h1v1h-1zM420 507h1v1h-1zM420 457h1v1h-1zM420 407h1v1h-1zM420 357h1v1h-1zM420 307h1v1h-1zM420 257h1v1h-1zM420 207h1v1h-1zM420 157h1v1h-1zM470 707h1v1h-1zM470 657h1v1h-1zM470 607h1v1h-1zM470 557h1v1h-1zM470 507h1v1h-1zM470 457h1v1h-1zM470 407h1v1h-1zM470 357h1v1h-1zM470 307h1v1h-1zM470 257h1v1h-1zM470 207h1v1h-1zM470 157h1v1h-1zM520 707h1v1h-1zM520 657h1v1h-1zM520 607h1v1h-1zM520 557h1v1h-1zM520 507h1v1h-1zM520 457h1v1h-1zM520 407h1v1h-1zM520 357h1v1h-1zM520 307h1v1h-1zM520 257h1v1h-1zM520 207h1v1h-1zM520 157h1v1h-1zM570 707h1v1h-1zM570 657h1v1h-1zM570 607h1v1h-1zM570 557h1v1h-1zM570 507h1v1h-1zM570 457h1v1h-1zM570 407h1v1h-1zM570 357h1v1h-1zM570 307h1v1h-1zM570 257h1v1h-1zM570 207h1v1h-1zM570 157h1v1h-1zM620 707h1v1h-1zM620 657h1v1h-1zM620 607h1v1h-1zM620 557h1v1h-1zM620 507h1v1h-1zM620 457h1v1h-1zM620 407h1v1h-1zM620 357h1v1h-1zM620 307h1v1h-1zM620 257h1v1h-1zM620 207h1v1h-1zM620 157h1v1h-1zM670 707h1v1h-1zM670 657h1v1h-1zM670 607h1v1h-1zM670 557h1v1h-1zM670 507h1v1h-1zM670 457h1v1h-1zM670 407h1v1h-1zM670 357h1v1h-1zM670 307h1v1h-1zM670 257h1v1h-1zM670 207h1v1h-1zM670 157h1v1h-1zM720 707h1v1h-1zM720 657h1v1h-1zM720 607h1v1h-1zM720 557h1v1h-1zM720 507h1v1h-1zM720 457h1v1h-1zM720 407h1v1h-1zM720 357h1v1h-1zM720 307h1v1h-1zM720 257h1v1h-1zM720 207h1v1h-1zM720 157h1v1h-1zM770 707h1v1h-1zM770 657h1v1h-1zM770 607h1v1h-1zM770 557h1v1h-1zM770 507h1v1h-1zM770 457h1v1h-1zM770 407h1v1h-1zM770 357h1v1h-1zM770 307h1v1h-1zM770 257h1v1h-1zM770 207h1v1h-1zM770 157h1v1h-1zM820 707h1v1h-1zM820 657h1v1h-1zM820 607h1v1h-1zM820 557h1v1h-1zM820 507h1v1h-1zM820 457h1v1h-1zM820 407h1v1h-1zM820 357h1v1h-1zM820 307h1v1h-1zM820 257h1v1h-1zM820 207h1v1h-1zM820 157h1v1h-1zM870 707h1v1h-1zM870 657h1v1h-1zM870 607h1v1h-1zM870 557h1v1h-1zM870 507h1v1h-1zM870 457h1v1h-1zM870 407h1v1h-1zM870 357h1v1h-1zM870 307h1v1h-1zM870 257h1v1h-1zM870 207h1v1h-1zM870 157h1v1h-1zM920 707h1v1h-1zM920 657h1v1h-1zM920 607h1v1h-1zM920 557h1v1h-1zM920 507h1v1h-1zM920 457h1v1h-1zM920 407h1v1h-1zM920 357h1v1h-1zM920 307h1v1h-1zM920 257h1v1h-1zM920 207h1v1h-1zM920 157h1v1h-1zM970 707h1v1h-1zM970 657h1v1h-1zM970 607h1v1h-1zM970 557h1v1h-1zM970 507h1v1h-1zM970 457h1v1h-1zM970 407h1v1h-1zM970 357h1v1h-1zM970 307h1v1h-1zM970 257h1v1h-1zM970 207h1v1h-1zM970 157h1v1h-1zM1020 707h1v1h-1zM1020 657h1v1h-1zM1020 607h1v1h-1zM1020 557h1v1h-1zM1020 507h1v1h-1zM1020 457h1v1h-1zM1020 407h1v1h-1zM1020 357h1v1h-1zM1020 307h1v1h-1zM1020 257h1v1h-1zM1020 207h1v1h-1zM1020 157h1v1h-1zM1070 707h1v1h-1zM1070 657h1v1h-1zM1070 607h1v1h-1zM1070 557h1v1h-1zM1070 507h1v1h-1zM1070 457h1v1h-1zM1070 407h1v1h-1zM1070 357h1v1h-1zM1070 307h1v1h-1zM1070 257h1v1h-1zM1070 207h1v1h-1zM1070 157h1v1h-1zM1120 707h1v1h-1zM1120 657h1v1h-1zM1120 607h1v1h-1zM1120 557h1v1h-1zM1120 507h1v1h-1zM1120 457h1v1h-1zM1120 407h1v1h-1zM1120 357h1v1h-1zM1120 307h1v1h-1zM1120 257h1v1h-1zM1120 207h1v1h-1zM1120 157h1v1h-1z" fill="#404040"/>
<rect x="100" y="706" width="40" height="2" fill="#520909"/>
<rect x="119" y="687" width="2" height="40" fill="#520909"/>
<rect x="119.3" y="706.3" width="1.4" height="1.4" fill="#801010"/>
<line x1="320.5" y1="407" x2="320.5" y2="607" stroke="#c4c4c4" stroke-width="2"/>
<line x1="220" y1="607.2" x2="320" y2="607.2" stroke="#5c1f1f" stroke-width="2"/>
<rect x="215" y="602" width="10" height="10" fill="#c8001e" stroke="#d9435a" stroke-width="0.5"/>
<rect x="315" y="602" width="10" height="10" fill="#0000a8" stroke="#3a3ad0" stroke-width="0.5"/>
<path d="M520.8 507.3 L720.5 407.3 L920.3 507.3 L720.5 607.3 Z" fill="none" stroke="#f2f2f2" stroke-width="1.3"/>
<circle cx="720.3" cy="407" r="4.7" fill="none" stroke="#8a0000" stroke-width="1.3"/>
<line x1="720.3" y1="402" x2="720.3" y2="412" stroke="#6a0000" stroke-width="1"/>
</g>
<rect x="1143" y="243" width="8" height="328" rx="4" fill="#7f7f7f"/>
<rect x="278" y="737" width="682" height="8" rx="4" fill="#7f7f7f"/>
</svg>
<div id="ldock" class="a"></div>
<div id="rdock" class="a"></div>
<svg class="a" style="left:1154px;top:104px" width="346" height="400" viewBox="1154 104 346 400">
<defs>
<linearGradient id="dtG" x1="0" y1="0" x2="0" y2="1"><stop offset="0" stop-color="#ececec"/><stop offset="1" stop-color="#d9d9d9"/></linearGradient>
<linearGradient id="dbG" x1="0" y1="0" x2="0" y2="1"><stop offset="0" stop-color="#e2e2e2"/><stop offset="1" stop-color="#f5f5f5"/></linearGradient>
<linearGradient id="pencG" x1="0" y1="0" x2="1" y2="0"><stop offset="0" stop-color="#e8b040"/><stop offset="0.5" stop-color="#f6d070"/><stop offset="1" stop-color="#c08020"/></linearGradient>
</defs>
<rect x="1154" y="104" width="301" height="4" fill="#c2c2c2"/>
<rect x="1154" y="107" width="2" height="400" fill="#b6b6b6"/>
<rect x="1156" y="108" width="299" height="21" fill="url(#dtG)"/>
<rect x="1156" y="108" width="299" height="1" fill="#f4f4f4"/>
<rect x="1156" y="129" width="299" height="2" fill="#b8b8b8"/>
<rect x="1156" y="131" width="299" height="24" fill="url(#dbG)"/>
<rect x="1156" y="155" width="299" height="2" fill="#b8b8b8"/>
<rect x="1214.5" y="131" width="1.6" height="24" fill="#b8b8b8"/>
<rect x="1274.5" y="131" width="1.6" height="24" fill="#b8b8b8"/>
<rect x="1334.5" y="131" width="1.6" height="24" fill="#b8b8b8"/>
<rect x="1394.5" y="131" width="1.6" height="24" fill="#b8b8b8"/>
<circle cx="1163.9" cy="117.9" r="6.9" fill="#616161"/>
<path d="M1161.2 115.2 L1166.6 120.6 M1166.6 115.2 L1161.2 120.6" stroke="#f0f0f0" stroke-width="1.8"/>
<circle cx="1182" cy="117.9" r="6.9" fill="#616161"/>
<path d="M1180.6 116.5 V115.3 H1185.9 V119.8 H1184.3" fill="none" stroke="#f4f4f4" stroke-width="1.1"/>
<rect x="1178.3" y="117.4" width="5.6" height="4.4" fill="none" stroke="#f4f4f4" stroke-width="1.1"/>
<text x="1322" y="122.8" font-family="Liberation Sans" font-size="11.8" text-anchor="middle" fill="#2c2c2c">Lista de capas</text>
<g transform="translate(1184.9 142.6) scale(1.0)"><path d="M-7.3 0.5 C-5 -4.5 -1.5 -5.6 0.5 -5.6 C3.5 -5.6 6 -3.5 7.3 0.3 C6 4 3 5.6 0 5.6 C-3.5 5.6 -6 3.5 -7.3 0.5 Z" fill="#000"/><path d="M-4.2 0.8 C-3.5 -2 -1.5 -3 0 -3 C2 -3 3.7 -2 4.2 0.8 C3.3 3 1.8 3.6 0 3.6 C-2 3.6 -3.5 3 -4.2 0.8 Z" fill="#fff"/><circle cx="0" cy="-0.3" r="2.5" fill="#000"/></g>
<g transform="translate(1245 142.6) scale(1.0)"><path d="M-7.3 0.5 C-5 -4.5 -1.5 -5.6 0.5 -5.6 C3.5 -5.6 6 -3.5 7.3 0.3 C6 4 3 5.6 0 5.6 C-3.5 5.6 -6 3.5 -7.3 0.5 Z" fill="#a8a8a8"/><path d="M-4.2 0.8 C-3.5 -2 -1.5 -3 0 -3 C2 -3 3.7 -2 4.2 0.8 C3.3 3 1.8 3.6 0 3.6 C-2 3.6 -3.5 3 -4.2 0.8 Z" fill="#fff"/><circle cx="0" cy="-0.3" r="2.5" fill="#a8a8a8"/></g>
<path d="M1303.4 137.3 h3.2 v4.6 h4.7 v3.2 h-4.7 v4.6 h-3.2 v-4.6 h-4.7 v-3.2 h4.7 Z" fill="#ff0000" stroke="#a00000" stroke-width="0.4"/>
<rect x="1359" y="141" width="12" height="3.5" fill="#ff0000" stroke="#a00000" stroke-width="0.4"/>
<g transform="translate(1418 149.5) rotate(-45.0)"><path d="M0 0 L3.5 -1.7 L16.79898987322333 -1.7 L16.79898987322333 1.7 L3.5 1.7 Z" fill="url(#pencG)" stroke="#8a5a10" stroke-width="0.5"/><path d="M0 0 L1.5 -0.8 L1.5 0.8 Z" fill="#333"/><path d="M16.79898987322333 -1.7 L19.29898987322333 -1.7 Q20.29898987322333 0 19.29898987322333 1.7 L16.79898987322333 1.7 Z" fill="#e02020" stroke="#902020" stroke-width="0.4"/></g>
<rect x="1161.5" y="163.6" width="15" height="7.6" fill="#fff" stroke="#000" stroke-width="1.1"/>
<text x="1183.3" y="171.6" font-family="Liberation Sans" font-size="13" fill="#111">0</text>
<g transform="translate(1395 173.6) rotate(-45.43078721700854)"><path d="M0 0 L3.5 -1.7 L15.809572031282407 -1.7 L15.809572031282407 1.7 L3.5 1.7 Z" fill="url(#pencG)" stroke="#8a5a10" stroke-width="0.5"/><path d="M0 0 L1.5 -0.8 L1.5 0.8 Z" fill="#333"/><path d="M15.809572031282407 -1.7 L18.309572031282407 -1.7 Q19.309572031282407 0 18.309572031282407 1.7 L15.809572031282407 1.7 Z" fill="#e02020" stroke="#902020" stroke-width="0.4"/></g>
<g transform="translate(1422.8 166.6) scale(1.0)"><path d="M-7.3 0.5 C-5 -4.5 -1.5 -5.6 0.5 -5.6 C3.5 -5.6 6 -3.5 7.3 0.3 C6 4 3 5.6 0 5.6 C-3.5 5.6 -6 3.5 -7.3 0.5 Z" fill="#000"/><path d="M-4.2 0.8 C-3.5 -2 -1.5 -3 0 -3 C2 -3 3.7 -2 4.2 0.8 C3.3 3 1.8 3.6 0 3.6 C-2 3.6 -3.5 3 -4.2 0.8 Z" fill="#fff"/><circle cx="0" cy="-0.3" r="2.5" fill="#000"/></g>
<path d="M1442 167 V164.5 C1442 161.2 1448.3 161.2 1448.3 164.5 V167" fill="none" stroke="#b8b8b8" stroke-width="1.5"/>
<rect x="1440.3" y="166.8" width="9.8" height="7" rx="0.8" fill="#b8b8b8"/>
<rect x="1455" y="107" width="45" height="1" fill="#e0e0e0"/>
<rect x="1462.2" y="116" width="1.6" height="1.6" fill="#a4a4a4"/>
<rect x="1468.2" y="116" width="1.6" height="1.6" fill="#a4a4a4"/>
<rect x="1474.2" y="116" width="1.6" height="1.6" fill="#a4a4a4"/>
<rect x="1480.2" y="116" width="1.6" height="1.6" fill="#a4a4a4"/>
<rect x="1486.2" y="116" width="1.6" height="1.6" fill="#a4a4a4"/>
<rect x="1456" y="120" width="43" height="43" rx="5" fill="#b4b4b4"/>
<rect x="1463.4" y="127.4" width="27.2" height="27.2" fill="#fff" stroke="#111" stroke-width="1"/>
<rect x="1463.4" y="127.4" width="27.2" height="4" fill="#000"/>
<rect x="1464.4" y="128.0" width="3" height="2.8" fill="#fff"/>
<path d="M1470.5 139 L1476 136 L1476 148.5 L1470.5 151.5 Z" fill="#888" stroke="#555" stroke-width="0.5"/>
<path d="M1473 139 L1483.5 133.5 L1483.5 146 L1473 151.5 Z" fill="#fff" stroke="#555" stroke-width="0.6"/>
<path d="M1475.5 147.5 L1481 139 L1481 146 Z" fill="none" stroke="#f03030" stroke-width="0.8"/>
<rect x="1463.4" y="174.3" width="27.2" height="27.2" fill="#fff" stroke="#111" stroke-width="1"/>
<rect x="1463.4" y="174.3" width="27.2" height="4" fill="#000"/>
<rect x="1464.4" y="174.9" width="3" height="2.8" fill="#fff"/>
<rect x="1471.5" y="182.5" width="9.5" height="7.5" fill="#fbf0c0" stroke="#555" stroke-width="0.7"/>
<circle cx="1479.8" cy="189.8" r="4.2" fill="#fbf0c0" stroke="#555" stroke-width="0.7"/>
<rect x="1463.4" y="219.8" width="27.2" height="27.2" fill="#fff" stroke="#111" stroke-width="1"/>
<rect x="1463.4" y="219.8" width="27.2" height="4" fill="#000"/>
<rect x="1464.4" y="220.4" width="3" height="2.8" fill="#fff"/>
<rect x="1469.5" y="228.5" width="15" height="12.5" rx="2.5" fill="#f0f0f0" stroke="#b8c8e8" stroke-width="0.9"/>
<rect x="1459.0" y="261" width="1" height="1" fill="#707070"/>
<rect x="1461.9" y="261" width="1" height="1" fill="#707070"/>
<rect x="1464.8" y="261" width="1" height="1" fill="#707070"/>
<rect x="1467.7" y="261" width="1" height="1" fill="#707070"/>
<rect x="1470.6" y="261" width="1" height="1" fill="#707070"/>
<rect x="1473.5" y="261" width="1" height="1" fill="#707070"/>
<rect x="1476.4" y="261" width="1" height="1" fill="#707070"/>
<rect x="1479.3" y="261" width="1" height="1" fill="#707070"/>
<rect x="1482.2" y="261" width="1" height="1" fill="#707070"/>
<rect x="1485.1" y="261" width="1" height="1" fill="#707070"/>
<rect x="1488.0" y="261" width="1" height="1" fill="#707070"/>
<rect x="1490.9" y="261" width="1" height="1" fill="#707070"/>
<rect x="1493.8" y="261" width="1" height="1" fill="#707070"/>
<rect x="1463.4" y="276.7" width="27.2" height="27.2" fill="#fff" stroke="#111" stroke-width="1"/>
<rect x="1463.4" y="276.7" width="27.2" height="4" fill="#000"/>
<rect x="1464.4" y="277.3" width="3" height="2.8" fill="#fff"/>
<rect x="1467" y="284.5" width="3.5" height="3" fill="#000"/>
<rect x="1472.5" y="284.3" width="14" height="3.4" fill="#fff" stroke="#333" stroke-width="0.7"/>
<rect x="1467" y="290.1" width="3.5" height="3" fill="#000"/>
<rect x="1472.5" y="289.90000000000003" width="14" height="3.4" fill="#fff" stroke="#333" stroke-width="0.7"/>
<rect x="1467" y="295.7" width="3.5" height="3" fill="#000"/>
<rect x="1472.5" y="295.5" width="14" height="3.4" fill="#fff" stroke="#333" stroke-width="0.7"/>
<rect x="1463.4" y="322.6" width="27.2" height="27.2" fill="#fff" stroke="#111" stroke-width="1"/>
<rect x="1463.4" y="322.6" width="27.2" height="4" fill="#000"/>
<rect x="1464.4" y="323.20000000000005" width="3" height="2.8" fill="#fff"/>
<path d="M1469.5 332 L1484.5 332 L1478.5 340 L1478.5 348 L1475.5 346.5 L1475.5 340 Z" fill="#a8a8a8" stroke="#666" stroke-width="0.6"/>
<ellipse cx="1477" cy="332.2" rx="7.5" ry="1.3" fill="#d0d0d0" stroke="#777" stroke-width="0.5"/>
<rect x="1463.4" y="368.7" width="27.2" height="27.2" fill="#fff" stroke="#111" stroke-width="1"/>
<rect x="1463.4" y="368.7" width="27.2" height="4" fill="#000"/>
<rect x="1464.4" y="369.3" width="3" height="2.8" fill="#fff"/>
<path d="M1469 378 L1473 380 L1473 388 L1469 390 Z" fill="none" stroke="#333" stroke-width="0.7"/>
<rect x="1473" y="380" width="9" height="8" fill="#fff" stroke="#444" stroke-width="0.7"/>
<line x1="1466" y1="384" x2="1488" y2="384" stroke="#f08080" stroke-width="0.6" stroke-dasharray="1 0.6"/>
<rect x="1478" y="381.5" width="5" height="5" fill="#999"/>
<rect x="1459.0" y="409.3" width="1" height="1" fill="#707070"/>
<rect x="1461.9" y="409.3" width="1" height="1" fill="#707070"/>
<rect x="1464.8" y="409.3" width="1" height="1" fill="#707070"/>
<rect x="1467.7" y="409.3" width="1" height="1" fill="#707070"/>
<rect x="1470.6" y="409.3" width="1" height="1" fill="#707070"/>
<rect x="1473.5" y="409.3" width="1" height="1" fill="#707070"/>
<rect x="1476.4" y="409.3" width="1" height="1" fill="#707070"/>
<rect x="1479.3" y="409.3" width="1" height="1" fill="#707070"/>
<rect x="1482.2" y="409.3" width="1" height="1" fill="#707070"/>
<rect x="1485.1" y="409.3" width="1" height="1" fill="#707070"/>
<rect x="1488.0" y="409.3" width="1" height="1" fill="#707070"/>
<rect x="1490.9" y="409.3" width="1" height="1" fill="#707070"/>
<rect x="1493.8" y="409.3" width="1" height="1" fill="#707070"/>
<rect x="1456" y="411" width="43" height="49" rx="5" fill="#b4b4b4"/>
</svg>
<svg class="a" style="left:1455px;top:415px" width="45" height="90" viewBox="1455 415 45 90">
<rect x="1463.4" y="424.4" width="27.2" height="27.2" fill="#fff" stroke="#111" stroke-width="1"/>
<rect x="1463.4" y="424.4" width="27.2" height="4" fill="#000"/>
<rect x="1464.4" y="425.0" width="3" height="2.8" fill="#fff"/>
<rect x="1466" y="433.0" width="8" height="0.8" fill="#999"/>
<rect x="1466" y="436.2" width="8" height="0.8" fill="#999"/>
<rect x="1466" y="439.4" width="10" height="0.8" fill="#999"/>
<rect x="1466" y="442.6" width="10" height="0.8" fill="#999"/>
<rect x="1463.4" y="446.5" width="27.2" height="5" fill="#fff" stroke="#333" stroke-width="0.6"/>
<rect x="1472" y="448.3" width="15" height="1.2" fill="#444"/>
<rect x="1463.4" y="471.3" width="27.2" height="27.2" fill="#fff" stroke="#111" stroke-width="1"/>
<rect x="1463.4" y="471.3" width="27.2" height="4" fill="#000"/>
<rect x="1464.4" y="471.90000000000003" width="3" height="2.8" fill="#fff"/>
<rect x="1470.5" y="479.5" width="13" height="15" rx="1" fill="#d08d2a" stroke="#9a6418" stroke-width="0.6"/>
<rect x="1472" y="481" width="10" height="12" fill="#f8f8f8"/>
<rect x="1474" y="478.3" width="6" height="3" rx="0.8" fill="#999"/>
<path d="M1482 490 L1479 493 L1482 493 Z" fill="#6a9ad0"/>
</svg>
<div id="status" class="a"></div>
<svg class="a" style="left:0;top:100px" width="1500" height="744" viewBox="0 100 1500 744">
<defs>
<radialGradient id="tabIcG" cx="0.45" cy="0.4" r="0.6"><stop offset="0" stop-color="#ffffff"/><stop offset="0.6" stop-color="#e8e8f0"/><stop offset="1" stop-color="#b8c0d8"/></radialGradient>
<linearGradient id="cmdBtnG" x1="0" y1="0" x2="0" y2="1"><stop offset="0" stop-color="#f2f2f2"/><stop offset="1" stop-color="#e2e2e2"/></linearGradient>
</defs>
<path d="M79.1 116.1 L86.7 123.7 M86.7 116.1 L79.1 123.7" stroke="#5a5a5a" stroke-width="1.1"/>
<circle cx="102" cy="118.5" r="5.1" fill="#f4f4f4" stroke="#2a3f8a" stroke-width="2.4"/>
<path d="M97.5 118 H106.5 M101.5 114 V123" stroke="#c8c8c8" stroke-width="0.6"/>
<path d="M99 121 L104 116" stroke="#e07070" stroke-width="0.6"/>
<line x1="102.5" y1="119" x2="107.2" y2="123.7" stroke="#f0a020" stroke-width="2.2"/>
<line x1="106.8" y1="123.3" x2="108.3" y2="124.8" stroke="#e06868" stroke-width="2.2"/>
<text x="631.6" y="124" font-family="Liberation Sans" font-size="11.5" text-anchor="middle" fill="#1a1a1a">* Sin título 1</text>
<text x="77.3" y="762.5" font-family="Liberation Sans" font-size="13" fill="#1010e0"><tspan font-style="italic">Comando:</tspan> line</text>
<text x="73" y="790" font-family="Liberation Sans" font-size="13" fill="#141414">Comando:</text>
<rect x="138" y="776" width="989" height="18.5" fill="#fff"/>
<rect x="1127.5" y="772.5" width="25.5" height="25" fill="url(#cmdBtnG)" stroke="#c0c0c0" stroke-width="1"/>
<rect x="1133.3" y="779.4" width="13.8" height="10.5" fill="#fff" stroke="#111" stroke-width="1"/>
<rect x="1133.3" y="779.4" width="13.8" height="2.6" fill="#111"/>
<rect x="253.5" y="802" width="1" height="39.5" fill="#8a8a8a"/>
<circle cx="509.4" cy="822" r="2.6" fill="#c4c4c4"/>
<circle cx="943.6" cy="822" r="2.6" fill="#c4c4c4"/>
<circle cx="1272.4" cy="822" r="2.6" fill="#c4c4c4"/>
<text x="2" y="815.8" font-family="Liberation Sans" font-size="9.3" fill="#111" stroke="#111" stroke-width="0.22" letter-spacing="0.66">63.4,83.4</text>
<text x="2" y="836.2" font-family="Liberation Sans" font-size="9.3" fill="#111" stroke="#111" stroke-width="0.22" letter-spacing="0.66">@-56.6,23.4</text>
<text x="256" y="815.7" font-family="Liberation Sans" font-size="9.3" fill="#111" stroke="#111" stroke-width="0.22" letter-spacing="0.66">104.7622&lt;53°</text>
<text x="256" y="836" font-family="Liberation Sans" font-size="9.3" fill="#111" stroke="#111" stroke-width="0.22" letter-spacing="0.66">@61.2464&lt;158°</text>
<text x="699" y="820" font-family="Liberation Sans" font-size="9.3" fill="#111" stroke="#111" stroke-width="0.22" letter-spacing="0.42" text-anchor="end">Seleccionar entidad o región</text>
<text x="699" y="830.9" font-family="Liberation Sans" font-size="9.3" fill="#111" stroke="#111" stroke-width="0.22" letter-spacing="0.42" text-anchor="end">Mover entidad o referencia</text>
<text x="949.2" y="819.7" font-family="Liberation Sans" font-size="9.3" fill="#111" stroke="#111" stroke-width="0.22" letter-spacing="0.42">Las entidades seleccionadas:</text>
<text x="949.2" y="831" font-family="Liberation Sans" font-size="9.3" fill="#111" stroke="#111" stroke-width="0.22" letter-spacing="0.42">1 Línea en capa "0".</text>
<path d="M725.9 806.5 C721 806.5 717.5 809.5 717.5 814.5 L717.5 827 C717.5 832.5 721 835.5 725.9 835.5 C730.8 835.5 734.3 832.5 734.3 827 L734.3 814.5 C734.3 809.5 730.8 806.5 725.9 806.5 Z" fill="#fff" stroke="#333" stroke-width="0.9"/>
<path d="M717.5 819 C721 820.5 730.8 820.5 734.3 819" fill="none" stroke="#333" stroke-width="0.8"/>
<rect x="724.3" y="808.5" width="3.2" height="7" rx="1.6" fill="#fff" stroke="#333" stroke-width="0.8"/>
<line x1="725.9" y1="815.5" x2="725.9" y2="819.8" stroke="#333" stroke-width="0.7"/>
</svg>
<svg class="a" style="left:480px;top:0" width="140" height="130" viewBox="480 0 140 130">
<defs>
<linearGradient id="ttG" x1="0" y1="0" x2="0" y2="1"><stop offset="0" stop-color="#f4f8fc"/><stop offset="1" stop-color="#dde6f0"/></linearGradient>
<filter id="ttS" x="-20%" y="-20%" width="140%" height="160%"><feGaussianBlur in="SourceAlpha" stdDeviation="0.8"/><feOffset dx="0.6" dy="1"/><feComponentTransfer><feFuncA type="linear" slope="0.45"/></feComponentTransfer><feMerge><feMergeNode/><feMergeNode in="SourceGraphic"/></feMerge></filter>
</defs>
<circle cx="540.7" cy="55.3" r="35.6" fill="none" stroke="#98b0c4" stroke-opacity="0.55" stroke-width="4.4"/>
<circle cx="540.7" cy="55.3" r="32.2" fill="none" stroke="#b8c8d8" stroke-opacity="0.3" stroke-width="2.6"/>
<path d="M541.1 56 L541.1 79.3 L546.5 74.2 L550.3 83 L554.3 81.3 L550.6 72.6 L557.9 72.4 Z" fill="#fff" stroke="#000" stroke-width="1.3" stroke-linejoin="round"/>
<rect x="536.5" y="92.5" width="47.5" height="22" rx="1.5" fill="url(#ttG)" stroke="#b8c4d0" stroke-width="0.8" filter="url(#ttS)"/>
<text x="560.2" y="108.6" font-family="Liberation Sans" font-size="14" text-anchor="middle" fill="#000">Borrar</text>
</svg>
</body></html>
